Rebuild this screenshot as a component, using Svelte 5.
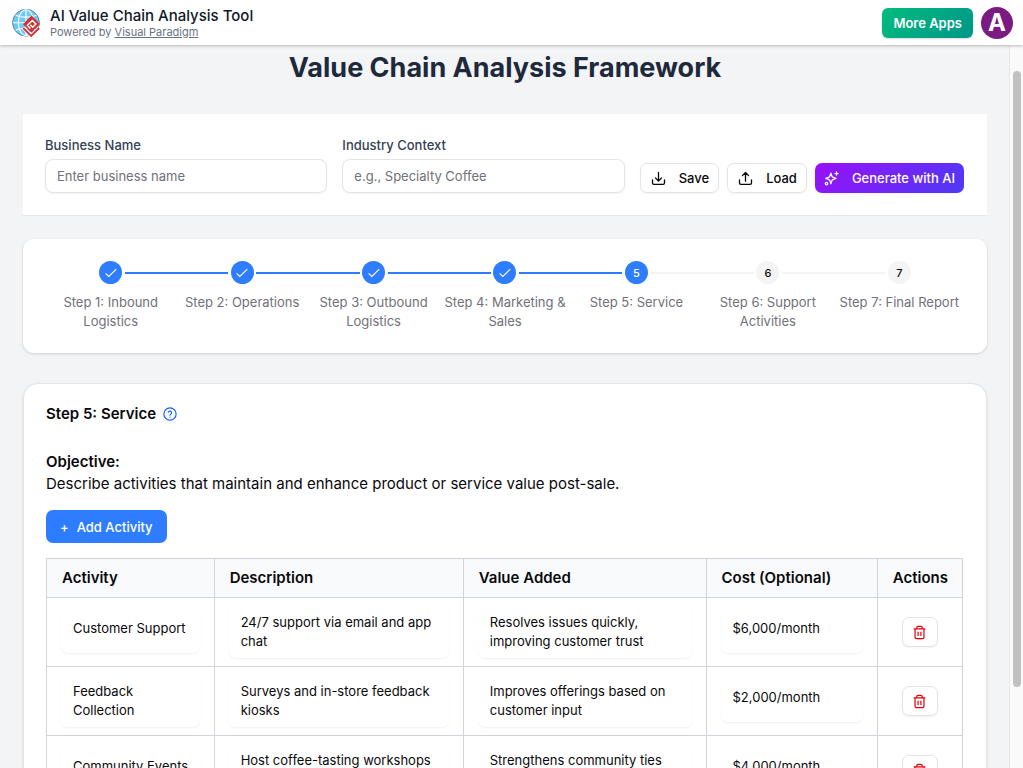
<script>
  const steps = [
    'Step 1: Inbound Logistics',
    'Step 2: Operations',
    'Step 3: Outbound Logistics',
    'Step 4: Marketing & Sales',
    'Step 5: Service',
    'Step 6: Support Activities',
    'Step 7: Final Report'
  ];
  const current = 5;

  let activities = $state([
    {
      name: 'Customer Support',
      description: '24/7 support via email and app chat',
      value: 'Resolves issues quickly, improving customer trust',
      cost: '$6,000/month'
    },
    {
      name: 'Feedback Collection',
      description: 'Surveys and in-store feedback kiosks',
      value: 'Improves offerings based on customer input',
      cost: '$2,000/month'
    },
    {
      name: 'Community Events',
      description: 'Host coffee-tasting workshops',
      value: 'Strengthens community ties',
      cost: '$4,000/month'
    }
  ]);

  function addActivity() {
    activities.push({ name: '', description: '', value: '', cost: '' });
  }
  function removeActivity(i) {
    activities.splice(i, 1);
  }
</script>

<div class="app">
  <header class="topbar">
    <svg class="logo" viewBox="0 0 30 30" aria-hidden="true">
      <circle cx="15" cy="14.7" r="13.4" fill="#6cc9fa" stroke="#5d8797" stroke-width="1" />
      <g fill="none" stroke="#fff" stroke-width="1.1">
        <path d="M15 1.700v26M2 14.700h26" />
        <ellipse cx="15" cy="14.700" rx="7.600" ry="12.900" />
        <path d="M4.600 7.200c6 2.600 14.800 2.600 20.800 0M4.600 22.200c6-2.600 14.800-2.600 20.800 0" />
      </g>
      <path d="M20.600 7.600l8.400 8.400-8.600 8.600-8.400-8.400z" fill="#d3302f" />
      <path d="M11.800 19.600l8.400 8.300 8.400-8.300" fill="none" stroke="#fff" stroke-width="3.400" />
      <path d="M12.200 20l8 7.900 8-7.900" fill="none" stroke="#d3302f" stroke-width="1.800" />
      <path d="M19.400 20.400l-3-3.200 5-4.700 3.500 3.500-3.200 3.200-2.400-2.400" fill="none" stroke="#fff" stroke-width="1.500" />
    </svg>
    <div class="brand">
      <div class="app-name">AI Value Chain Analysis Tool</div>
      <div class="powered">Powered by <a href="#visual-paradigm">Visual Paradigm</a></div>
    </div>
    <button class="more" type="button">More Apps</button>
    <button class="avatar" type="button" aria-label="Account">A</button>
  </header>

  <div class="viewport">
    <main>
      <h1>Value Chain Analysis Framework</h1>

      <section class="toolbar">
        <div class="field">
          <label for="business">Business Name</label>
          <input id="business" type="text" placeholder="Enter business name" />
        </div>
        <div class="field">
          <label for="industry">Industry Context</label>
          <input id="industry" type="text" placeholder="e.g., Specialty Coffee" />
        </div>
        <div class="buttons">
          <button class="btn" type="button">
            <svg viewBox="0 0 16 16" aria-hidden="true">
              <path d="M8 1.500v9M4.700 7.300L8 10.600l3.300-3.300M1.600 9.500v3.200c0 .9.600 1.500 1.500 1.500h9.800c.9 0 1.500-.6 1.500-1.500V9.500" />
            </svg>
            Save
          </button>
          <button class="btn" type="button">
            <svg viewBox="0 0 16 16" aria-hidden="true">
              <path d="M8 10.800V1.600M4.700 4.900L8 1.600l3.300 3.300M1.600 9.500v3.200c0 .9.600 1.500 1.500 1.500h9.800c.9 0 1.500-.6 1.500-1.500V9.500" />
            </svg>
            Load
          </button>
          <button class="btn generate" type="button">
            <svg viewBox="0 0 24 24" aria-hidden="true">
              <path
                d="M11 3.500l1.900 5.200a2 2 0 0 0 1.200 1.200l5.200 1.900-5.200 1.900a2 2 0 0 0-1.200 1.200L11 20.500l-1.900-5.600a2 2 0 0 0-1.200-1.200l-5.200-1.900 5.200-1.900a2 2 0 0 0 1.200-1.200z"
              />
              <path d="M20 1.500v5M22.500 4h-5" />
              <circle cx="4" cy="20" r="2" />
            </svg>
            Generate with AI
          </button>
        </div>
      </section>

      <ol class="stepper">
        {#each steps as step, i}
          <li class:done={i + 1 < current} class:active={i + 1 === current}>
            <span class="dot">
              {#if i + 1 < current}
                <svg viewBox="0 0 12 12" aria-hidden="true"><path d="M.6 6.400l3.200 3L11.300 2.200" /></svg>
              {:else}
                {i + 1}
              {/if}
            </span>
            <span class="caption">{step}</span>
          </li>
        {/each}
      </ol>

      <section class="card">
        <h2>
          Step 5: Service
          <button class="help" type="button" aria-label="Help">
            <svg viewBox="0 0 24 24" aria-hidden="true">
              <circle cx="12" cy="12" r="10.500" />
              <path d="M9.100 9a3 3 0 0 1 5.800 1c0 2-2.900 2.500-2.900 4.200M12 17.200v.3" />
            </svg>
          </button>
        </h2>

        <h3>Objective:</h3>
        <p>Describe activities that maintain and enhance product or service value post-sale.</p>

        <button class="add" type="button" onclick={addActivity}><span>+</span>Add Activity</button>

        <table>
          <colgroup>
            <col class="c1" /><col class="c2" /><col class="c3" /><col class="c4" /><col class="c5" />
          </colgroup>
          <thead>
            <tr>
              <th>Activity</th>
              <th>Description</th>
              <th>Value Added</th>
              <th>Cost (Optional)</th>
              <th>Actions</th>
            </tr>
          </thead>
          <tbody>
            {#each activities as row, i}
              <tr>
                <td><textarea rows="1" aria-label="Activity" bind:value={row.name}></textarea></td>
                <td><textarea class="tall" rows="2" aria-label="Description" bind:value={row.description}></textarea></td>
                <td><textarea class="tall" rows="2" aria-label="Value added" bind:value={row.value}></textarea></td>
                <td><textarea rows="1" aria-label="Cost" bind:value={row.cost}></textarea></td>
                <td>
                  <button class="trash" type="button" aria-label="Delete activity" onclick={() => removeActivity(i)}>
                    <svg viewBox="0 0 14 16" aria-hidden="true">
                      <path d="M.7 4.200h12.600M4.100 4V2.700c0-.8.500-1.300 1.300-1.300h3.200c.8 0 1.300.5 1.300 1.300V4M2.200 4.400v8.700c0 .8.600 1.400 1.400 1.400h6.800c.8 0 1.400-.6 1.400-1.400V4.400M5.500 7.200v4.500M8.500 7.200v4.500" />
                    </svg>
                  </button>
                </td>
              </tr>
            {/each}
          </tbody>
        </table>
      </section>
    </main>

    <div class="rail" aria-hidden="true"><div class="thumb"></div></div>
  </div>
</div>

<style>
  :global(body) {
    margin: 0;
    background: #f3f4f6;
  }
  .app,
  .app * {
    box-sizing: border-box;
  }
  .app {
    display: flex;
    flex-direction: column;
    height: 100vh;
    overflow: hidden;
    font-family: Inter, 'Liberation Sans', sans-serif;
    font-size: 13px;
    color: #09090b;
    background: #f3f4f6;
  }
  button,
  input,
  textarea {
    font: inherit;
    color: inherit;
    margin: 0;
  }
  button {
    cursor: pointer;
  }
  svg {
    display: block;
    flex: none;
  }

  .topbar {
    flex: none;
    position: relative;
    display: flex;
    align-items: center;
    height: 45px;
    padding: 0 10px 0 11px;
    background: #fff;
    box-shadow: 0 1px 3px rgba(0, 0, 0, 0.25);
  }
  .logo {
    width: 30px;
    height: 30px;
  }
  .brand {
    margin-left: 9px;
    flex: 1;
  }
  .app-name {
    font-size: 15px;
    line-height: 18px;
    font-weight: 500;
    color: #111827;
  }
  .powered {
    font-size: 11px;
    line-height: 14px;
    color: #6b7280;
  }
  .powered a {
    color: inherit;
    text-decoration: underline;
  }
  .more {
    height: 30px;
    padding: 0 11px;
    border: 0;
    border-radius: 6px;
    color: #fff;
    font-weight: 600;
    background: linear-gradient(135deg, #00bc7d, #009689);
    box-shadow: 0 1px 2px rgba(0, 0, 0, 0.15);
  }
  .avatar {
    width: 32px;
    height: 32px;
    margin-left: 8px;
    padding: 0;
    border: 0;
    border-radius: 50%;
    background: #7b1a80;
    color: #fff;
    font-size: 24px;
    line-height: 32px;
    font-weight: 700;
  }

  .viewport {
    flex: 1;
    min-height: 0;
    display: flex;
  }
  main {
    flex: 1;
    min-width: 0;
    padding: 6px 22px 0 23px;
    overflow: hidden;
  }
  h1 {
    margin: 0 0 29px;
    font-size: 27px;
    line-height: 34px;
    font-weight: 700;
    text-align: center;
    color: #1e293b;
  }

  .toolbar {
    display: flex;
    align-items: flex-end;
    gap: 15px;
    padding: 22px;
    padding-right: 23px;
    background: #fff;
    border-bottom: 1px solid #e5e7eb;
  }
  .field {
    flex: 1;
    min-width: 0;
  }
  .field label {
    display: block;
    margin-bottom: 4px;
    line-height: 19px;
    font-weight: 500;
    color: #334155;
  }
  .field input {
    display: block;
    width: 100%;
    height: 34px;
    padding: 0 11px;
    border: 1px solid #e4e4e7;
    border-radius: 8px;
    background: #fff;
    box-shadow: 0 1px 2px rgba(0, 0, 0, 0.05);
  }
  .field input::placeholder {
    color: #71717a;
    opacity: 1;
  }
  .buttons {
    display: flex;
    gap: 8px;
  }
  .btn {
    display: flex;
    align-items: center;
    gap: 13px;
    height: 30px;
    padding: 0 9px 0 10px;
    border: 1px solid #e4e4e7;
    border-radius: 7px;
    background: #fff;
    font-weight: 500;
    white-space: nowrap;
    box-shadow: 0 1px 2px rgba(0, 0, 0, 0.05);
  }
  .btn svg {
    width: 15px;
    height: 15px;
  }
  .help svg {
    width: 14px;
    height: 14px;
  }
  .btn svg,
  .help svg {
    fill: none;
    stroke: currentColor;
    stroke-width: 1.4;
    stroke-linecap: round;
    stroke-linejoin: round;
  }
  .btn.generate {
    padding: 0 9px;
    border: 0;
    color: #fff;
    background: linear-gradient(135deg, #9810fa, #4f39f6);
  }
  .btn.generate svg {
    stroke-width: 2;
  }

  .stepper {
    display: grid;
    grid-template-columns: repeat(7, 1fr);
    margin: 23px 0 30px;
    padding: 22px;
    list-style: none;
    background: #fff;
    border-radius: 11px;
    box-shadow: 0 1px 3px rgba(0, 0, 0, 0.15);
  }
  .stepper li {
    position: relative;
    display: flex;
    flex-direction: column;
    align-items: center;
    gap: 9px;
    text-align: center;
    color: #71717a;
  }
  .stepper li:not(:last-child)::after {
    content: '';
    position: absolute;
    top: 11px;
    left: calc(50% + 14px);
    width: calc(100% - 28px);
    height: 2px;
    background: #f4f4f5;
  }
  .stepper li.done::after {
    background: #2f7dff;
  }
  .dot {
    display: flex;
    align-items: center;
    justify-content: center;
    width: 23px;
    height: 23px;
    border-radius: 50%;
    background: #f4f4f5;
    color: #09090b;
    font-size: 11px;
    font-weight: 500;
  }
  .done .dot,
  .active .dot {
    background: #2f7dff;
    color: #fff;
  }
  .dot svg {
    width: 12px;
    height: 12px;
    fill: none;
    stroke: currentColor;
    stroke-width: 1.1;
  }
  .caption {
    padding: 0 4px;
    line-height: 19px;
  }

  .card {
    padding: 19px 23px 22px 22px;
    background: #fff;
    border: 1px solid #e4e4e7;
    border-radius: 15px;
    box-shadow: 0 1px 3px rgba(0, 0, 0, 0.1);
  }
  h2,
  h3,
  p {
    margin: 0;
    font-size: 15px;
    line-height: 22px;
  }
  h2 {
    display: flex;
    align-items: center;
    gap: 7px;
    font-weight: 600;
  }
  h3 {
    margin-top: 26px;
    font-weight: 600;
  }
  .help {
    padding: 0;
    border: 0;
    background: none;
    color: #155dfc;
  }
  .help svg {
    stroke-width: 2;
  }
  .add {
    display: flex;
    align-items: center;
    gap: 8px;
    height: 33px;
    margin: 15px 0;
    padding: 0 14px;
    border: 0;
    border-radius: 7px;
    background: #2f7dff;
    color: #fff;
    font-weight: 500;
  }

  table {
    width: 100%;
    table-layout: fixed;
    border-collapse: collapse;
  }
  .c1 {
    width: 18.3%;
  }
  .c2 {
    width: 27.2%;
  }
  .c3 {
    width: 26.5%;
  }
  .c4 {
    width: 18.7%;
  }
  .c5 {
    width: 9.3%;
  }
  th,
  td {
    border: 1px solid #d1d5db;
  }
  th {
    padding: 8px 15px;
    background: #f9fafb;
    font-size: 15px;
    line-height: 22px;
    font-weight: 600;
    text-align: left;
    white-space: nowrap;
  }
  td {
    padding: 8px 14px;
    vertical-align: middle;
  }
  textarea {
    display: block;
    width: 100%;
    min-height: 41px;
    padding: 7px 8px 7px 12px;
    border: 0;
    border-radius: 7px;
    background: #fff;
    line-height: 19px;
    resize: none;
    overflow: hidden;
    field-sizing: content;
    box-shadow: 0 1px 2px rgba(0, 0, 0, 0.06);
  }
  textarea.tall {
    min-height: 52px;
  }
  .trash {
    display: flex;
    align-items: center;
    justify-content: center;
    width: 36px;
    height: 30px;
    margin: 0 auto;
    padding: 0;
    border: 1px solid #e4e4e7;
    border-radius: 7px;
    background: #fff;
    color: #e7000b;
    box-shadow: 0 1px 2px rgba(0, 0, 0, 0.05);
  }
  .trash svg {
    width: 13px;
    height: 15px;
    fill: none;
    stroke: currentColor;
    stroke-width: 1.3;
  }

  .rail {
    flex: none;
    width: 14px;
    padding: 26px 2px 0 3px;
    background: #fafafa;
    border-left: 1px solid #e8e8e8;
  }
  .thumb {
    height: 88.4%;
    border-radius: 4px;
    background: #c1c1c1;
  }
</style>
